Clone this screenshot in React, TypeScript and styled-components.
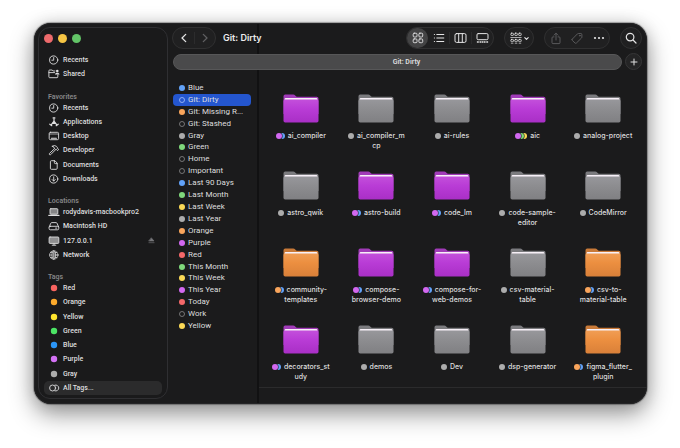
import React from "react";
import styled, { createGlobalStyle } from "styled-components";

const GlobalStyle = createGlobalStyle`
  *, *::before, *::after { box-sizing: border-box; }
  body {
    margin: 0;
    background: #fff;
    font-family: Inter, "Liberation Sans", sans-serif;
    color: #dededf;
  }
  button { font: inherit; color: inherit; background: none; border: 0; padding: 0; margin: 0; }
  a { color: inherit; text-decoration: none; }
  h1, h2, ul { margin: 0; padding: 0; list-style: none; }
  svg { display: block; flex: none; }
`;

const palette = {
  red: "#f96460",
  orange: "#fdaa2c",
  yellow: "#ffe52e",
  green: "#4ce465",
  blue: "#2b96f8",
  purple: "#d472f6",
  gray: "#acacac",
};

const soft = {
  red: "#f4686a",
  orange: "#f9a55c",
  yellow: "#fbd957",
  green: "#7fd87c",
  blue: "#62a2f8",
  purple: "#d268f0",
  gray: "#acacac",
  none: "none",
};
type Soft = keyof typeof soft;

/* ---------- layout ---------- */

const Desktop = styled.div`
  display: flex;
  min-height: 100vh;
  padding: 23px 33px 44px 34px;
`;

const Window = styled.div`
  flex: 1;
  min-width: 0;
  display: flex;
  border-radius: 17px;
  background: #1b1b1c;
  box-shadow:
    inset 0 0 0 1px #242426,
    0 0 1px 1px rgba(0, 0, 0, 0.3),
    0 10px 24px rgba(0, 0, 0, 0.42),
    0 0 16px rgba(0, 0, 0, 0.12);
`;

const Sidebar = styled.aside`
  flex: none;
  width: 130px;
  margin: 4px 0 5px 4px;
  padding: 0 5px 3px;
  display: flex;
  flex-direction: column;
  border: 1px solid #2f2f32;
  border-radius: 12px;
  background: #1a1a1b;
`;

const TrafficLights = styled.div`
  display: flex;
  gap: 5px;
  padding: 6px 0 10px;
`;

const Light = styled.button<{ $color: string }>`
  width: 9px;
  height: 9px;
  border-radius: 50%;
  background: ${(p) => p.$color};
`;

const SideNav = styled.nav`
  flex: 1;
  display: flex;
  flex-direction: column;
  font-family: Roboto, "Liberation Sans", sans-serif;
`;

const SideHeading = styled.h2`
  flex: none;
  height: 19px;
  padding: 10px 4px 0;
  font-size: 7px;
  line-height: 10px;
  font-weight: 600;
  color: #858587;
`;

const SideLink = styled.a<{ $active?: boolean }>`
  flex: 1 1 14px;
  display: flex;
  align-items: center;
  gap: 3px;
  padding: 0 4px;
  border-radius: 5px;
  font-size: 7px;
  line-height: 10px;
  font-weight: 500;
  white-space: nowrap;
  background: ${(p) => (p.$active ? "#2b2b2c" : "transparent")};
`;

const SideLabel = styled.span`
  flex: 1;
`;

const Eject = styled.span`
  padding: 0 3px;
  color: #77777a;
`;

const Main = styled.main`
  flex: 1;
  min-width: 0;
  display: flex;
  flex-direction: column;
  background: linear-gradient(#111112, #111112) 89px 1px / 2px calc(100% - 2px) no-repeat;
`;

const Toolbar = styled.header`
  display: flex;
  align-items: center;
  gap: 10px;
  padding: 4px 5px 0 4px;
`;

const Pill = styled.div`
  flex: none;
  display: flex;
  align-items: center;
  height: 22px;
  border: 1px solid #303031;
  border-radius: 11px;
  background: #202021;
`;

const ToolButton = styled.button<{ $width: number; $on?: boolean; $dim?: boolean }>`
  display: flex;
  align-items: center;
  justify-content: center;
  gap: 2px;
  width: ${(p) => p.$width}px;
  height: 20px;
  border-radius: 10px;
  background: ${(p) => (p.$on ? "#434344" : "transparent")};
  color: ${(p) => (p.$dim ? "#606062" : "#e4e4e5")};
`;

const Separator = styled.span`
  width: 1px;
  height: 12px;
  background: #2c2c2d;
`;

const Title = styled.h1`
  flex: 1;
  margin-left: -3px;
  font-size: 9px;
  line-height: 14px;
  font-weight: 600;
  color: #ececec;
  white-space: nowrap;
`;

const TabBar = styled.div`
  display: flex;
  align-items: center;
  gap: 3px;
  padding: 4px 5px 0;
`;

const Tab = styled.button`
  flex: 1;
  height: 16px;
  padding-left: 18px;
  border: 1px solid #575758;
  border-radius: 8px;
  background: #4a4a4b;
  font-family: Roboto, "Liberation Sans", sans-serif;
  font-size: 7px;
  line-height: 10px;
  font-weight: 600;
`;

const AddTab = styled.button`
  display: flex;
  align-items: center;
  justify-content: center;
  width: 17px;
  height: 17px;
  border: 1px solid #363637;
  border-radius: 50%;
  background: #242425;
`;

const Content = styled.div`
  flex: 1;
  display: flex;
`;

const TagList = styled.ul`
  flex: none;
  width: 89px;
  padding: 12px 6px 72px 5px;
  display: grid;
  grid-auto-rows: 1fr;
  font-family: Roboto, "Liberation Sans", sans-serif;
`;

const TagItem = styled.li`
  display: flex;
`;

const TagButton = styled.button<{ $active?: boolean }>`
  flex: 1;
  display: flex;
  align-items: center;
  gap: 3px;
  padding: 0 6px;
  border-radius: 4px;
  font-size: 8px;
  line-height: 10px;
  font-weight: 400;
  white-space: nowrap;
  background: ${(p) => (p.$active ? "#2456cf" : "transparent")};
`;

const Browser = styled.section`
  flex: 1;
  min-width: 0;
  margin-left: 2px;
  display: flex;
  flex-direction: column;
  justify-content: space-between;
`;

const FolderGrid = styled.ul`
  display: grid;
  grid-template-columns: repeat(5, 1fr);
  grid-auto-rows: 62px;
  row-gap: 15px;
  padding: 24px 6px 0 4px;
`;

const FolderCell = styled.li`
  display: flex;
  justify-content: center;
`;

const FolderButton = styled.button`
  display: flex;
  flex-direction: column;
  align-items: center;
  gap: 8px;
  align-self: flex-start;
  font-size: 7px;
  line-height: 10px;
  font-weight: 500;
  white-space: nowrap;
`;

const FolderName = styled.span`
  display: flex;
  flex-direction: column;
  align-items: center;
`;

const NameLine = styled.span`
  display: flex;
  align-items: center;
  gap: 3px;
`;

const StatusBar = styled.footer`
  height: 17px;
  border-top: 1px solid #2b2b2c;
`;

/* ---------- drawings ---------- */

type IconProps = { w?: number; h?: number; sw?: number; children: React.ReactNode };
const Icon = ({ w = 12, h = 12, sw = 0.9, children }: IconProps) => (
  <svg
    width={w}
    height={h}
    viewBox={`0 0 ${w} ${h}`}
    fill="none"
    stroke="currentColor"
    strokeWidth={sw}
    strokeLinecap="round"
    strokeLinejoin="round"
    aria-hidden="true"
  >
    {children}
  </svg>
);

const ClockIcon = () => (
  <Icon>
    <circle cx="5.7" cy="6" r="4.1" />
    <path d="M5.7 3.5V6.2H3.8" />
  </Icon>
);
const SharedIcon = () => (
  <Icon>
    <path d="M7 3H5.1L4.2 2H1.6Q.9 2 .9 2.8V8.9Q.9 9.7 1.7 9.7H9Q9.8 9.7 9.8 8.9V7M.9 4.6H6.6" />
    <circle cx="9.3" cy="3" r="1.3" fill="currentColor" stroke="none" />
    <path d="M7 6.6C7.1 4.1 11.4 4.1 11.5 6.6Z" fill="currentColor" stroke="none" />
  </Icon>
);
const AppsIcon = () => (
  <Icon sw={1.2}>
    <path d="M6 2.6V5.2L3.4 8.6M6 5.2L8.6 8.6" />
    <path d="M5.1 1.9H6.9M1.8 8.2L3.8 9.7M10.2 8.2L8.2 9.7M4.6 7.3H7.4" />
  </Icon>
);
const DesktopIcon = () => (
  <Icon>
    <rect x="1.2" y="2.3" width="9.4" height="7.4" rx="1.2" />
    <path d="M1.4 4H10.4" strokeWidth=".7" />
    <path d="M3.4 8.3H8.4" strokeWidth="1.1" />
  </Icon>
);
const HammerIcon = () => (
  <Icon>
    <path d="M6.2 5L1.4 9.5Q1 10.2 1.6 10.7Q2.1 11.1 2.7 10.6L7.3 6" />
    <path d="M4.3 2.2Q6.6.7 8.4 2.3L9.3 3.3V4.3L10.7 5.3L9.6 6.6L8.3 5.4H7.3L6.2 4.3Q6.5 2.6 4.3 2.2Z" />
  </Icon>
);
const DocumentIcon = () => (
  <Icon>
    <path d="M6.5 1.7H3.4Q2.4 1.7 2.4 2.7V9.3Q2.4 10.3 3.4 10.3H8.2Q9.2 10.3 9.2 9.3V4.5ZM6.4 1.9V3.7Q6.4 4.6 7.3 4.6H9" />
  </Icon>
);
const DownloadIcon = () => (
  <Icon>
    <circle cx="5.7" cy="6" r="4.1" />
    <path d="M5.7 3.8V8M4.1 6.5L5.7 8.1L7.3 6.5" />
  </Icon>
);
const LaptopIcon = () => (
  <Icon>
    <rect x="2" y="2.7" width="7.8" height="5.5" rx=".8" fill="currentColor" fillOpacity=".55" />
    <path d="M.8 9.4H11" strokeWidth="1.1" />
  </Icon>
);
const DriveIcon = () => (
  <Icon>
    <path d="M1.2 6.9L2.8 3.2Q3.1 2.6 3.8 2.6H8Q8.7 2.6 9 3.2L10.6 6.9" />
    <rect x="1.1" y="6.3" width="9.6" height="3.5" rx="1.2" />
    <path d="M7.6 8.1H8.8" />
  </Icon>
);
const DisplayIcon = () => (
  <Icon>
    <rect x="1.1" y="2" width="9.7" height="6.4" rx=".9" fill="currentColor" fillOpacity=".6" />
    <path d="M6 8.6V10M4.2 10.2H7.8" />
  </Icon>
);
const NetworkIcon = () => (
  <Icon sw={0.7}>
    <circle cx="5.8" cy="6" r="4.2" />
    <ellipse cx="5.8" cy="6" rx="2" ry="4.2" />
    <path d="M1.6 6H10M5.8 1.8V10.2M2.6 3.4Q5.8 5 9 3.4M2.6 8.6Q5.8 7 9 8.6" />
  </Icon>
);
const AllTagsIcon = () => (
  <Icon>
    <circle cx="4.6" cy="6" r="3" />
    <path d="M7 3.1A3 3 0 1 1 7 8.9" />
  </Icon>
);
const ColorDot = ({ color }: { color: string }) => (
  <Icon>
    <circle cx="6" cy="6" r="3.2" fill={color} stroke="none" />
  </Icon>
);
const EjectIcon = () => (
  <Icon w={7} h={7} sw={0.6}>
    <path d="M3.5 1L6 4H1ZM.9 5.7H6.1" fill="currentColor" />
  </Icon>
);

const ChevronIcon = ({ right }: { right?: boolean }) => (
  <Icon w={8} h={10} sw={1.3}>
    <path d={right ? "M2.3 1.4L6 5L2.3 8.6" : "M5.7 1.4L2 5L5.7 8.6"} />
  </Icon>
);
const GridIcon = () => (
  <Icon>
    <rect x="1.2" y="1.2" width="3.8" height="3.8" rx="1" />
    <rect x="6.9" y="1.2" width="3.8" height="3.8" rx="1" />
    <rect x="1.2" y="6.9" width="3.8" height="3.8" rx="1" />
    <rect x="6.9" y="6.9" width="3.8" height="3.8" rx="1" />
  </Icon>
);
const ListIcon = () => (
  <Icon sw={1}>
    <path d="M3.8 2.5H10.8M3.8 6H10.8M3.8 9.5H10.8M1.3 2.5H1.5M1.3 6H1.5M1.3 9.5H1.5" />
  </Icon>
);
const ColumnsIcon = () => (
  <Icon w={13} sw={1}>
    <rect x="1" y="1.6" width="11" height="8.8" rx="1.5" />
    <path d="M4.7 1.8V10.2M8.3 1.8V10.2" />
  </Icon>
);
const GalleryIcon = () => (
  <Icon w={13} sw={1}>
    <rect x="1" y="1.6" width="11" height="6.1" rx="1.2" />
    <path d="M1.4 10H2.3M4 10H4.8M6.2 10H6.9M8.3 10H9.1M10.8 10H11.6" strokeWidth="1.3" />
  </Icon>
);
const GroupIcon = () => (
  <Icon sw={0.8}>
    {[1.2, 7.4].map((y) =>
      [0.9, 4.8, 8.7].map((x) => <rect key={`${x}-${y}`} x={x} y={y} width="2.5" height="2.3" rx=".6" />)
    )}
    <path d="M.8 5.5H11.2" strokeWidth=".7" />
    <path d="M1.3 11.3H3M5.2 11.3H6.9M9.1 11.3H10.8" strokeWidth=".6" />
  </Icon>
);
const DownIcon = () => (
  <Icon w={5} h={5} sw={1.1}>
    <path d="M.8 1.6L2.5 3.4L4.2 1.6" />
  </Icon>
);
const ShareIcon = () => (
  <Icon h={13}>
    <path d="M4 4.9H3Q2 4.9 2 5.9V10.6Q2 11.6 3 11.6H9Q10 11.6 10 10.6V5.9Q10 4.9 9 4.9H8M6 8V1.3M4.1 3.1L6 1.2L7.9 3.1" />
  </Icon>
);
const TagIcon = () => (
  <Icon>
    <path d="M1.2 7.2L6.4 1.9Q6.8 1.5 7.4 1.5H9.8Q10.9 1.5 10.9 2.6V5Q10.9 5.6 10.5 6L5.4 11Q4.7 11.6 4 11L1.3 8.4Q.7 7.8 1.2 7.2Z" />
    <circle cx="8.8" cy="3.7" r=".4" />
  </Icon>
);
const MoreIcon = () => (
  <Icon>
    {[2, 6, 10].map((x) => (
      <circle key={x} cx={x} cy="6" r="1.1" fill="currentColor" stroke="none" />
    ))}
  </Icon>
);
const SearchIcon = () => (
  <Icon sw={1.2}>
    <circle cx="5.1" cy="5.1" r="3.8" />
    <path d="M8 8L11 11" />
  </Icon>
);
const PlusIcon = () => (
  <Icon w={8} h={8} sw={1}>
    <path d="M4 1V7M1 4H7" />
  </Icon>
);

const TagCircle = ({ color, active }: { color: Soft; active?: boolean }) => (
  <svg width="6" height="6" viewBox="0 0 6 6" aria-hidden="true">
    <circle
      cx="3"
      cy="3"
      r={color === "none" ? 2.5 : 3}
      fill={soft[color]}
      stroke={color === "none" ? (active ? "#a9c3fa" : "#8a8a8b") : "none"}
      strokeWidth=".8"
    />
  </svg>
);

const TagStack = ({ tags }: { tags: Soft[] }) => {
  const width = 6 + (tags.length - 1) * 3;
  return (
    <svg width={width} height="6" viewBox={`0 0 ${width} 6`} overflow="visible" aria-hidden="true">
      {tags
        .map((tag, i) => (
          <React.Fragment key={tag}>
            <circle cx={3 + i * 3} cy="3" r="3.6" fill="#1b1b1c" />
            <circle cx={3 + i * 3} cy="3" r="3" fill={soft[tag]} />
          </React.Fragment>
        ))
        .reverse()}
    </svg>
  );
};

const folderTones = {
  purple: { back: "#a13bb8", top: "#c34fdb", mid: "#b93cd6", low: "#a92fc6" },
  gray: { back: "#7b7b7e", top: "#97979b", mid: "#8d8d90", low: "#808083" },
  orange: { back: "#c97a38", top: "#f09d54", mid: "#ec8f40", low: "#d98039" },
};
type Tone = keyof typeof folderTones;

const FolderArt = ({ tone, id }: { tone: Tone; id: string }) => {
  const c = folderTones[tone];
  return (
    <svg width="36" height="29" viewBox="0 0 36 29" aria-hidden="true">
      <defs>
        <linearGradient id={id} x1="0" y1="0" x2="0" y2="1">
          <stop offset="0" stopColor={c.top} />
          <stop offset=".4" stopColor={c.mid} />
          <stop offset="1" stopColor={c.low} />
        </linearGradient>
      </defs>
      <path d="M.5 20V2.2Q.5.5 2.2.5H10.2Q11.4.5 12.2 1.4L13 2.2Q13.6 2.8 14.8 2.8H33.8Q35.5 2.8 35.5 4.5V20Z" fill={c.back} />
      <rect x="1.6" y="4" width="32.8" height="4" rx="1" fill="#f7f0f7" />
      <path d="M.5 7Q.5 5.6 2 5.6H34Q35.5 5.6 35.5 7V26.8Q35.5 28.5 33.8 28.5H2.2Q.5 28.5.5 26.8Z" fill={`url(#${id})`} />
    </svg>
  );
};

/* ---------- data ---------- */

type SideEntry = { label: string; icon: React.ReactNode; eject?: boolean; active?: boolean };
const sections: { heading?: string; items: SideEntry[] }[] = [
  {
    items: [
      { label: "Recents", icon: <ClockIcon /> },
      { label: "Shared", icon: <SharedIcon /> },
    ],
  },
  {
    heading: "Favorites",
    items: [
      { label: "Recents", icon: <ClockIcon /> },
      { label: "Applications", icon: <AppsIcon /> },
      { label: "Desktop", icon: <DesktopIcon /> },
      { label: "Developer", icon: <HammerIcon /> },
      { label: "Documents", icon: <DocumentIcon /> },
      { label: "Downloads", icon: <DownloadIcon /> },
    ],
  },
  {
    heading: "Locations",
    items: [
      { label: "rodydavis-macbookpro2", icon: <LaptopIcon /> },
      { label: "Macintosh HD", icon: <DriveIcon /> },
      { label: "127.0.0.1", icon: <DisplayIcon />, eject: true },
      { label: "Network", icon: <NetworkIcon /> },
    ],
  },
  {
    heading: "Tags",
    items: [
      { label: "Red", icon: <ColorDot color={palette.red} /> },
      { label: "Orange", icon: <ColorDot color={palette.orange} /> },
      { label: "Yellow", icon: <ColorDot color={palette.yellow} /> },
      { label: "Green", icon: <ColorDot color={palette.green} /> },
      { label: "Blue", icon: <ColorDot color={palette.blue} /> },
      { label: "Purple", icon: <ColorDot color={palette.purple} /> },
      { label: "Gray", icon: <ColorDot color={palette.gray} /> },
      { label: "All Tags...", icon: <AllTagsIcon />, active: true },
    ],
  },
];

const tags: [string, Soft][] = [
  ["Blue", "blue"],
  ["Git: Dirty", "none"],
  ["Git: Missing R...", "orange"],
  ["Git: Stashed", "none"],
  ["Gray", "gray"],
  ["Green", "green"],
  ["Home", "none"],
  ["Important", "none"],
  ["Last 90 Days", "blue"],
  ["Last Month", "green"],
  ["Last Week", "yellow"],
  ["Last Year", "gray"],
  ["Orange", "orange"],
  ["Purple", "purple"],
  ["Red", "red"],
  ["This Month", "green"],
  ["This Week", "yellow"],
  ["This Year", "purple"],
  ["Today", "red"],
  ["Work", "none"],
  ["Yellow", "yellow"],
];

const folders: { name: string[]; tone: Tone; tags: Soft[] }[] = [
  { name: ["ai_compiler"], tone: "purple", tags: ["purple", "blue"] },
  { name: ["ai_compiler_m", "cp"], tone: "gray", tags: ["gray"] },
  { name: ["ai-rules"], tone: "gray", tags: ["gray"] },
  { name: ["aic"], tone: "purple", tags: ["purple", "green", "yellow"] },
  { name: ["analog-project"], tone: "gray", tags: ["gray"] },
  { name: ["astro_qwik"], tone: "gray", tags: ["gray"] },
  { name: ["astro-build"], tone: "purple", tags: ["purple", "blue"] },
  { name: ["code_lm"], tone: "purple", tags: ["purple", "blue"] },
  { name: ["code-sample-", "editor"], tone: "gray", tags: ["gray"] },
  { name: ["CodeMirror"], tone: "gray", tags: ["gray"] },
  { name: ["community-", "templates"], tone: "orange", tags: ["orange", "blue"] },
  { name: ["compose-", "browser-demo"], tone: "purple", tags: ["purple", "blue"] },
  { name: ["compose-for-", "web-demos"], tone: "purple", tags: ["purple", "blue"] },
  { name: ["csv-material-", "table"], tone: "gray", tags: ["gray"] },
  { name: ["csv-to-", "material-table"], tone: "orange", tags: ["orange", "blue"] },
  { name: ["decorators_st", "udy"], tone: "purple", tags: ["purple", "blue"] },
  { name: ["demos"], tone: "gray", tags: ["gray"] },
  { name: ["Dev"], tone: "gray", tags: ["gray"] },
  { name: ["dsp-generator"], tone: "gray", tags: ["gray"] },
  { name: ["figma_flutter_", "plugin"], tone: "orange", tags: ["orange", "blue"] },
];

/* ---------- app ---------- */

export default function App() {
  return (
    <>
      <GlobalStyle />
      <Desktop>
        <Window>
          <Sidebar>
            <TrafficLights>
              <Light $color="#ed6a6c" aria-label="Close" />
              <Light $color="#f6c544" aria-label="Minimize" />
              <Light $color="#62c467" aria-label="Zoom" />
            </TrafficLights>
            <SideNav aria-label="Sidebar">
              {sections.map((section, i) => (
                <React.Fragment key={i}>
                  {section.heading && <SideHeading>{section.heading}</SideHeading>}
                  {section.items.map((item) => (
                    <SideLink key={item.label} href="#" $active={item.active}>
                      {item.icon}
                      <SideLabel>{item.label}</SideLabel>
                      {item.eject && (
                        <Eject role="img" aria-label="Eject">
                          <EjectIcon />
                        </Eject>
                      )}
                    </SideLink>
                  ))}
                </React.Fragment>
              ))}
            </SideNav>
          </Sidebar>
          <Main>
            <Toolbar>
              <Pill>
                <ToolButton $width={21} aria-label="Back"><ChevronIcon /></ToolButton>
                <Separator />
                <ToolButton $width={20} $dim aria-label="Forward"><ChevronIcon right /></ToolButton>
              </Pill>
              <Title>Git: Dirty</Title>
              <Pill>
                <ToolButton $width={21} $on aria-label="Icons"><GridIcon /></ToolButton>
                <ToolButton $width={21} aria-label="List"><ListIcon /></ToolButton>
                <Separator />
                <ToolButton $width={21} aria-label="Columns"><ColumnsIcon /></ToolButton>
                <Separator />
                <ToolButton $width={21} aria-label="Gallery"><GalleryIcon /></ToolButton>
              </Pill>
              <Pill>
                <ToolButton $width={28} aria-label="Group by"><GroupIcon /><DownIcon /></ToolButton>
              </Pill>
              <Pill>
                <ToolButton $width={21} $dim aria-label="Share"><ShareIcon /></ToolButton>
                <ToolButton $width={22} $dim aria-label="Edit tags"><TagIcon /></ToolButton>
                <ToolButton $width={21} aria-label="More"><MoreIcon /></ToolButton>
              </Pill>
              <Pill>
                <ToolButton $width={20} aria-label="Search"><SearchIcon /></ToolButton>
              </Pill>
            </Toolbar>
            <TabBar>
              <Tab>Git: Dirty</Tab>
              <AddTab aria-label="New tab"><PlusIcon /></AddTab>
            </TabBar>
            <Content>
              <TagList>
                {tags.map(([label, color], i) => (
                  <TagItem key={label}>
                    <TagButton $active={i === 1}>
                      <TagCircle color={color} active={i === 1} />
                      {label}
                    </TagButton>
                  </TagItem>
                ))}
              </TagList>
              <Browser>
                <FolderGrid>
                  {folders.map((folder, i) => (
                    <FolderCell key={folder.name[0]}>
                      <FolderButton>
                        <FolderArt tone={folder.tone} id={`folder-${i}`} />
                        <FolderName>
                          <NameLine>
                            <TagStack tags={folder.tags} />
                            {folder.name[0]}
                          </NameLine>
                          {folder.name[1] && <NameLine>{folder.name[1]}</NameLine>}
                        </FolderName>
                      </FolderButton>
                    </FolderCell>
                  ))}
                </FolderGrid>
                <StatusBar />
              </Browser>
            </Content>
          </Main>
        </Window>
      </Desktop>
    </>
  );
}
